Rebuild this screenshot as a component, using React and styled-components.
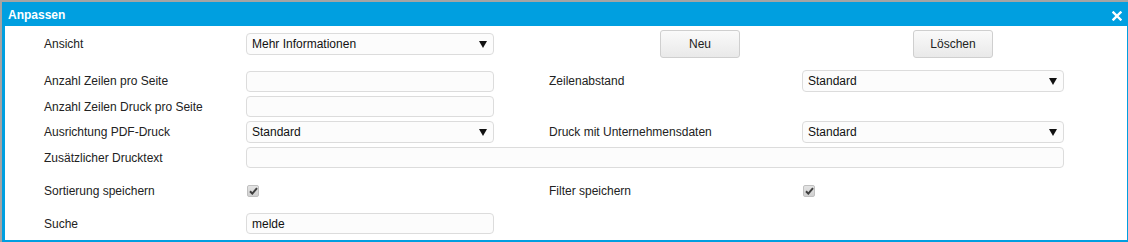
import React from "react";
import styled, { createGlobalStyle } from "styled-components";

const GlobalStyle = createGlobalStyle`
    html, body {
        margin: 0;
        padding: 0;
        background: #ffffff;
    }
    * {
        box-sizing: border-box;
    }
`;

const BLUE = "#009fe0";

const App = () => {
    return (
        <>
            <GlobalStyle />
            <StyledFrame>
                <StyledDialog>
                    <StyledHeader>
                        <StyledTitle>Anpassen</StyledTitle>
                        <StyledClose aria-label="close">
                            <svg width="10" height="10" viewBox="0 0 10 10">
                                <path d="M1.5 1.5 L8.5 8.5 M8.5 1.5 L1.5 8.5" stroke="#ffffff" strokeWidth="2.4" strokeLinecap="square" />
                            </svg>
                        </StyledClose>
                    </StyledHeader>
                    <StyledBody>
                        <StyledRow $height={28} $top={0}>
                            <StyledLabel>Ansicht</StyledLabel>
                            <Select value="Mehr Informationen" />
                            <span />
                            <StyledButton $offset={111}>Neu</StyledButton>
                            <StyledButton $offset={111}>Löschen</StyledButton>
                        </StyledRow>
                        <StyledRow $top={12}>
                            <StyledLabel>Anzahl Zeilen pro Seite</StyledLabel>
                            <StyledInput />
                            <span />
                            <StyledLabel>Zeilenabstand</StyledLabel>
                            <Select value="Standard" />
                        </StyledRow>
                        <StyledRow $top={5}>
                            <StyledLabel>Anzahl Zeilen Druck pro Seite</StyledLabel>
                            <StyledInput />
                        </StyledRow>
                        <StyledRow $top={4}>
                            <StyledLabel>Ausrichtung PDF-Druck</StyledLabel>
                            <Select value="Standard" />
                            <span />
                            <StyledLabel>Druck mit Unternehmensdaten</StyledLabel>
                            <Select value="Standard" />
                        </StyledRow>
                        <StyledRow $top={5}>
                            <StyledLabel>Zusätzlicher Drucktext</StyledLabel>
                            <StyledInput $wide />
                        </StyledRow>
                        <StyledRow $top={12}>
                            <StyledLabel>Sortierung speichern</StyledLabel>
                            <Checkbox />
                            <span />
                            <StyledLabel>Filter speichern</StyledLabel>
                            <Checkbox />
                        </StyledRow>
                        <StyledRow $top={12}>
                            <StyledLabel>Suche</StyledLabel>
                            <StyledInput>melde</StyledInput>
                        </StyledRow>
                    </StyledBody>
                </StyledDialog>
            </StyledFrame>
        </>
    );
};

const Select = ({ value }) => (
    <StyledSelect>
        <span>{value}</span>
        <StyledArrow>
            <svg width="8" height="7" viewBox="0 0 8 7">
                <path d="M0 0 H8 L4 7 Z" fill="#111111" />
            </svg>
        </StyledArrow>
    </StyledSelect>
);

const Checkbox = () => (
    <StyledCheckbox>
        <svg width="9" height="8" viewBox="0 0 9 8">
            <path d="M1 4.3 L3.3 6.6 L8 1.2" fill="none" stroke="#3f3f3f" strokeWidth="2" />
        </svg>
    </StyledCheckbox>
);

export default App;

const StyledFrame = styled.div`
    width: 1128px;
    height: 242px;
    border-top: 2px solid #a4a4a4;
    border-left: 2px solid #a4a4a4;
    display: flex;
`;

const StyledDialog = styled.div`
    flex: 1;
    display: flex;
    flex-direction: column;
    background-color: ${BLUE};
    padding: 0 1px 2px 0;
`;

const StyledHeader = styled.div`
    height: 24px;
    display: flex;
    flex-direction: row;
    align-items: center;
    justify-content: space-between;
    padding: 0 5px 0 6px;
`;

const StyledTitle = styled.span`
    font-family: "Liberation Sans", Arial, sans-serif;
    font-size: 12px;
    font-weight: 700;
    color: #ffffff;
    padding-top: 1px;
`;

const StyledClose = styled.span`
    display: flex;
    align-items: center;
    padding-top: 4px;
`;

const StyledBody = styled.div`
    flex: 1;
    background-color: #ffffff;
    margin-left: 3px;
    padding: 4px 0 0 39px;
    display: flex;
    flex-direction: column;
`;

const StyledRow = styled.div`
    display: grid;
    grid-template-columns: 202px 248px 55px 253px 262px;
    align-items: center;
    height: ${props => props.$height || 21}px;
    margin-top: ${props => props.$top}px;
`;

const StyledLabel = styled.span`
    font-family: "Liberation Sans", Arial, sans-serif;
    font-size: 12px;
    color: #222222;
    white-space: nowrap;
`;

const StyledField = styled.div`
    height: 21px;
    border: 1px solid #dcdcdc;
    border-radius: 4px;
    background-color: #fcfcfc;
    font-family: "Liberation Sans", Arial, sans-serif;
    font-size: 12px;
    color: #111111;
    display: flex;
    align-items: center;
    padding: 0 5px;
`;

const StyledInput = styled(StyledField)`
    grid-column: ${props => props.$wide ? "2 / 6" : "auto"};
`;

const StyledSelect = styled(StyledField)`
    height: 22px;
    justify-content: space-between;
    padding: 0 6px 0 5px;
`;

const StyledArrow = styled.span`
    display: flex;
    align-items: center;
`;

const StyledButton = styled.button`
    justify-self: start;
    margin-left: ${props => props.$offset}px;
    width: 80px;
    height: 28px;
    padding: 0;
    border: 1px solid #cfcfcf;
    border-radius: 3px;
    background: linear-gradient(#fafafa, #e9e9e9);
    font-family: "Liberation Sans", Arial, sans-serif;
    font-size: 12px;
    color: #222222;
`;

const StyledCheckbox = styled.span`
    justify-self: start;
    margin-left: 1px;
    width: 12px;
    height: 12px;
    border: 1px solid #c0c0c0;
    border-radius: 2px;
    background: linear-gradient(#e4e4e4, #d0d0d0);
    display: flex;
    align-items: center;
    justify-content: center;
`;
